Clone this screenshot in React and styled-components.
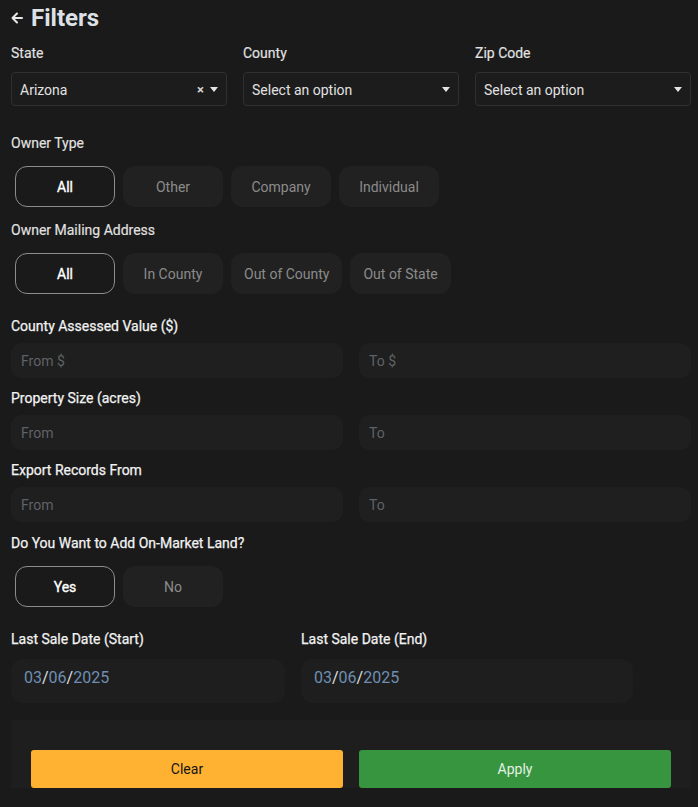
import React, { useState } from "react";
import styled, { createGlobalStyle } from "styled-components";

const Global = createGlobalStyle`
  html, body { margin: 0; padding: 0; background: #1a1a1a; }
  body { font-family: Roboto, "Noto Sans", Arial, sans-serif; color: #e4e4e4; }
  * { box-sizing: border-box; }
`;

const Page = styled.div`
  width: 698px;
  min-height: 807px;
  padding: 0 7px 0 11px;
  background: #1a1a1a;
`;

const TitleRow = styled.div`
  display: flex;
  align-items: center;
  gap: 8px;
  height: 36px;
  margin-bottom: 9px;
  color: #dde1e6;
`;

const Title = styled.h1`
  margin: 0;
  font-size: 24px;
  font-weight: 700;
  line-height: 36px;
  color: #dde1e6;
`;

const Label = styled.div`
  font-size: 14px;
  font-weight: 400;
  line-height: 16px;
  color: ${(p) => (p.$bright ? "#f2f2f2" : "#e2e2e2")};
  -webkit-text-stroke: ${(p) => (p.$bright ? "0.25px #f2f2f2" : "0.15px #e2e2e2")};
  margin-top: ${(p) => p.$mt || 0}px;
  margin-bottom: ${(p) => p.$mb || 9}px;
`;

const Grid3 = styled.div`
  display: grid;
  grid-template-columns: repeat(3, 1fr);
  gap: 16px;
`;

const Field = styled.div`
  display: flex;
  flex-direction: column;
`;

const SelectBox = styled.div`
  height: 34px;
  display: flex;
  align-items: center;
  padding: 1px 8px 0;
  border: 1px solid #303030;
  border-radius: 4px;
  background: #1c1c1c;
  font-size: 14px;
  color: #e2e2e2;
`;

const SelectText = styled.span`
  flex: 1;
`;

const ClearX = styled.span`
  font-size: 13px;
  font-weight: 700;
  color: #d8d8d8;
  margin-right: 6px;
`;

const Caret = styled.span`
  width: 0;
  height: 0;
  border-left: 4.5px solid transparent;
  border-right: 4.5px solid transparent;
  border-top: 5px solid #e4e4e4;
`;

const ChipRow = styled.div`
  display: flex;
  gap: 8px;
  padding-left: 4px;
`;

const Chip = styled.button`
  min-width: 100px;
  height: 41px;
  padding: 0 12px;
  border-radius: 12px;
  font-family: inherit;
  font-size: 14px;
  cursor: pointer;
  border: 1px solid ${(p) => (p.$active ? "#8d8d8d" : "transparent")};
  background: ${(p) => (p.$active ? "transparent" : "#212121")};
  color: ${(p) => (p.$active ? "#ffffff" : "#8b8b8b")};
  font-weight: 400;
  -webkit-text-stroke: ${(p) => (p.$active ? "0.35px #ffffff" : "0")};
`;

const Grid2 = styled.div`
  display: grid;
  grid-template-columns: ${(p) => p.$cols || "1fr 1fr"};
  gap: 16px;
  margin-top: ${(p) => p.$mt || 0}px;
`;

const TextInput = styled.input`
  height: 35px;
  width: 100%;
  border: none;
  outline: none;
  border-radius: 10px;
  background: #1f1f1f;
  padding: 0 10px;
  font-family: inherit;
  font-size: 14px;
  color: #ddd;
  &::placeholder { color: #5e6266; }
`;

const DateBox = styled.div`
  height: 44px;
  border-radius: 12px;
  background: #1e1e1e;
  display: flex;
  align-items: center;
  padding: 0 13px 8px;
  font-size: 16px;
  color: #6e8fb3;
`;

const Slash = styled.span`
  color: #e0e0e0;
`;

const Footer = styled.div`
  width: 680px;
  margin-top: 17px;
  height: 68px;
  background: #1e1e1e;
  padding: 30px 20px 0;
  overflow: hidden;
`;

const ActionButton = styled.button`
  height: 38px;
  border: none;
  border-radius: 3px;
  font-family: inherit;
  font-size: 14px;
  cursor: pointer;
  background: ${(p) => (p.$variant === "clear" ? "#ffb232" : "#37953f")};
  color: ${(p) => (p.$variant === "clear" ? "#141414" : "#e6f1e6")};
`;

const BackArrow = () => (
  <svg width="12" height="12" viewBox="0 0 12 12" fill="none" stroke="#e8e8e8" strokeWidth="2" strokeLinecap="round" strokeLinejoin="round">
    <path d="M11 6H1.5M6 1.5L1.5 6L6 10.5" />
  </svg>
);

const DateValue = ({ m, d, y }) => (
  <DateBox>
    {m}
    <Slash>/</Slash>
    {d}
    <Slash>/</Slash>
    {y}
  </DateBox>
);

function ChipGroup({ options }) {
  const [sel, setSel] = useState(options[0]);
  return (
    <ChipRow>
      {options.map((o) => (
        <Chip key={o} $active={sel === o} onClick={() => setSel(o)}>
          {o}
        </Chip>
      ))}
    </ChipRow>
  );
}

export default function App() {
  return (
    <>
      <Global />
      <Page>
        <TitleRow>
          <BackArrow />
          <Title>Filters</Title>
        </TitleRow>

        <Grid3>
          <Field>
            <Label $mb={11}>State</Label>
            <SelectBox>
              <SelectText>Arizona</SelectText>
              <ClearX>×</ClearX>
              <Caret />
            </SelectBox>
          </Field>
          <Field>
            <Label $mb={11}>County</Label>
            <SelectBox>
              <SelectText>Select an option</SelectText>
              <Caret />
            </SelectBox>
          </Field>
          <Field>
            <Label $mb={11}>Zip Code</Label>
            <SelectBox>
              <SelectText>Select an option</SelectText>
              <Caret />
            </SelectBox>
          </Field>
        </Grid3>

        <Label $mt={29} $mb={15}>Owner Type</Label>
        <ChipGroup options={["All", "Other", "Company", "Individual"]} />

        <Label $mt={15} $mb={15}>Owner Mailing Address</Label>
        <ChipGroup options={["All", "In County", "Out of County", "Out of State"]} />

        <Label $bright $mt={24} $mb={9}>County Assessed Value ($)</Label>
        <Grid2>
          <TextInput placeholder="From $" />
          <TextInput placeholder="To $" />
        </Grid2>

        <Label $bright $mt={12} $mb={9}>Property Size (acres)</Label>
        <Grid2>
          <TextInput placeholder="From" />
          <TextInput placeholder="To" />
        </Grid2>

        <Label $bright $mt={12} $mb={9}>Export Records From</Label>
        <Grid2>
          <TextInput placeholder="From" />
          <TextInput placeholder="To" />
        </Grid2>

        <Label $bright $mt={13} $mb={15}>Do You Want to Add On-Market Land?</Label>
        <ChipGroup options={["Yes", "No"]} />

        <Grid2 $cols="274px 332px" $mt={24}>
          <Field>
            <Label $bright $mb={12}>Last Sale Date (Start)</Label>
            <DateValue m="03" d="06" y="2025" />
          </Field>
          <Field>
            <Label $bright $mb={12}>Last Sale Date (End)</Label>
            <DateValue m="03" d="06" y="2025" />
          </Field>
        </Grid2>

        <Footer>
          <Grid2>
            <ActionButton $variant="clear">Clear</ActionButton>
            <ActionButton $variant="apply">Apply</ActionButton>
          </Grid2>
        </Footer>
      </Page>
    </>
  );
}
